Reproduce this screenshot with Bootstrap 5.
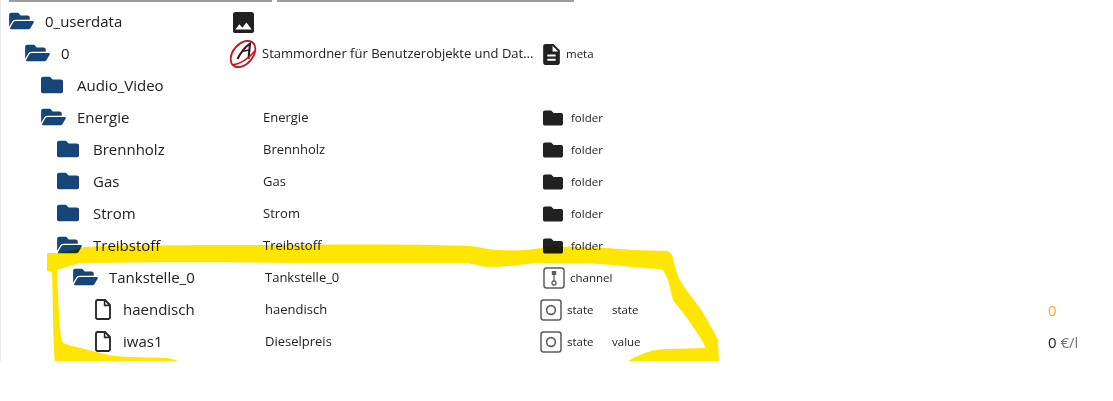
<!DOCTYPE html>
<html lang="en">
<head>
    <meta charset="UTF-8">
    <title>Objects</title>
    <link href="https://cdn.jsdelivr.net/npm/bootstrap@5.3.0/dist/css/bootstrap.min.css" rel="stylesheet">
    <style>
        body { background: #fff; color: #212121; font-family: "Open Sans", "Noto Sans", sans-serif; }
        .tree-wrap { height: 361px; overflow: hidden; border-left: 1px solid #e8e8e8; }
        .head-rule { height: 2px; margin-bottom: 4px; padding-left: 8px; }
        .head-rule span { display: block; height: 2px; background: #9e9e9e; }
        .rule-a { width: 263px; }
        .rule-b { width: 297px; margin-left: 5px; }
        .tree-row { height: 32px; }
        .name-cell { width: 228px; font-size: 15px; padding-bottom: 2px; }
        .lvl0 { padding-left: 8px; }
        .lvl1 { padding-left: 24px; }
        .lvl2 { padding-left: 40px; }
        .lvl3 { padding-left: 56px; }
        .lvl4 { padding-left: 72px; }
        .lvl5 { padding-left: 94px; }
        .tree-ico { width: 36px; flex: none; }
        .tree-ico svg { display: block; }
        .lvl5 .tree-ico { width: 28px; }
        .fold-open { width: 25px; height: 22px; fill: #164578; }
        .fold-shut { width: 22px; height: 22px; fill: #164578; }
        .file-line { width: 16px; height: 21px; }
        .obj-ico { width: 33px; flex: none; }
        .obj-ico svg { display: block; }
        .desc-cell { width: 277px; flex: none; font-size: 13px; padding-left: 1px; white-space: nowrap; }
        .desc-in { padding-left: 3px; }
        .type-cell { width: 73px; flex: none; font-size: 11.5px; }
        .type-cell svg { flex: none; }
        .t-folder { padding-left: 4px; gap: 8px; }
        .t-meta { gap: 2px; }
        .t-channel { padding-left: 4px; gap: 5px; }
        .t-state { padding-left: 1px; gap: 5px; }
        .role-cell { width: 436px; flex: none; font-size: 11.5px; }
        .val-cell { font-size: 15px; }
        .val-warn { color: #ffa726; }
        .val-unit { color: #757575; }
        .marker { position: absolute; left: -1px; top: 0; mix-blend-mode: multiply; pointer-events: none; }
    </style>
</head>
<body>
    <svg width="0" height="0" class="d-block">
        <defs>
            <symbol id="i-open" viewBox="0 0 576 512"><path d="M572.694 292.093L500.27 416.248A63.997 63.997 0 0 1 444.989 448H45.025c-18.523 0-30.064-20.093-20.731-36.093l72.424-124.155A64 64 0 0 1 152 256h399.964c18.523 0 30.064 20.093 20.73 36.093zM152 224h328v-48c0-26.51-21.49-48-48-48H272l-64-64H48C21.49 64 0 85.49 0 112v278.046l69.077-118.418C86.214 242.25 117.989 224 152 224z"/></symbol>
            <symbol id="i-shut" viewBox="0 0 512 512"><path d="M464 128H272l-64-64H48C21.49 64 0 85.49 0 112v288c0 26.51 21.49 48 48 48h416c26.51 0 48-21.49 48-48V176c0-26.51-21.49-48-48-48z"/></symbol>
            <symbol id="i-file" viewBox="0 0 16 21"><path d="M2.5 1H10l5 5v12.5a1.5 1.5 0 0 1-1.5 1.5h-11A1.5 1.5 0 0 1 1 18.5v-16A1.5 1.5 0 0 1 2.5 1z" fill="none" stroke="#2b2b2b" stroke-width="1.9"/><path d="M9.6 1v5.4H15" fill="none" stroke="#2b2b2b" stroke-width="1.6"/></symbol>
            <symbol id="i-state" viewBox="0 0 22 22"><rect x="1" y="1" width="20" height="20" rx="2.5" fill="none" stroke="#5c5c5c" stroke-width="1.5"/><circle cx="11" cy="11" r="4.4" fill="none" stroke="#5c5c5c" stroke-width="1.6"/></symbol>
        </defs>
    </svg>

    <div class="tree-wrap position-relative">
        <div class="head-rule d-flex"><span class="rule-a"></span><span class="rule-b"></span></div>

        <div class="tree-row d-flex align-items-center">
            <div class="name-cell lvl0 d-flex align-items-center"><div class="tree-ico"><svg class="fold-open"><use href="#i-open"/></svg></div>0_userdata</div>
            <div class="obj-ico ps-1">
                <svg width="21" height="21" viewBox="3 3 18 18" fill="#212121"><path d="M21 19V5c0-1.1-.9-2-2-2H5c-1.1 0-2 .9-2 2v14c0 1.1.9 2 2 2h14c1.1 0 2-.9 2-2zM8.5 13.5l2.5 3.01L14.5 12l4.5 6H5l3.5-4.5z"/></svg>
            </div>
        </div>

        <div class="tree-row d-flex align-items-center">
            <div class="name-cell lvl1 d-flex align-items-center"><div class="tree-ico"><svg class="fold-open"><use href="#i-open"/></svg></div>0</div>
            <div class="obj-ico">
                <svg width="28" height="28" viewBox="0 0 28 28" fill="none">
                    <ellipse cx="14" cy="14" rx="15" ry="10" transform="rotate(-50 14 14)" stroke="#c4161c" stroke-width="1.8"/>
                    <path d="M8.5 19C11.500 13 16 7 21 3.500L19.500 19" stroke="#3b1114" stroke-width="2.100"/>
                    <path d="M12.500 11.500L20.500 10" stroke="#3b1114" stroke-width="1.300"/>
                    <path d="M4 24.500C11 24.500 20 18 26 11" stroke="#c4161c" stroke-width="1.600"/>
                </svg>
            </div>
            <div class="desc-cell ps-0">Stammordner für Benutzerobjekte und Dat...</div>
            <div class="type-cell t-meta d-flex align-items-center">
                <svg width="25" height="25" viewBox="0 0 24 24" fill="#212121"><path d="M14 2H6c-1.1 0-2 .9-2 2v16c0 1.1.9 2 2 2h12c1.1 0 2-.9 2-2V8l-6-6zm2 16H8v-2h8v2zm0-4H8v-2h8v2zm-3-5V3.5L18.5 9H13z"/></svg>
                <span>meta</span>
            </div>
        </div>

        <div class="tree-row d-flex align-items-center">
            <div class="name-cell lvl2 d-flex align-items-center"><div class="tree-ico"><svg class="fold-shut"><use href="#i-shut"/></svg></div>Audio_Video</div>
        </div>

        <div class="tree-row d-flex align-items-center">
            <div class="name-cell lvl2 d-flex align-items-center"><div class="tree-ico"><svg class="fold-open"><use href="#i-open"/></svg></div>Energie</div>
            <div class="obj-ico"></div>
            <div class="desc-cell">Energie</div>
            <div class="type-cell t-folder d-flex align-items-center"><svg width="20" height="20" fill="#212121"><use href="#i-shut"/></svg><span>folder</span></div>
        </div>

        <div class="tree-row d-flex align-items-center">
            <div class="name-cell lvl3 d-flex align-items-center"><div class="tree-ico"><svg class="fold-shut"><use href="#i-shut"/></svg></div>Brennholz</div>
            <div class="obj-ico"></div>
            <div class="desc-cell">Brennholz</div>
            <div class="type-cell t-folder d-flex align-items-center"><svg width="20" height="20" fill="#212121"><use href="#i-shut"/></svg><span>folder</span></div>
        </div>

        <div class="tree-row d-flex align-items-center">
            <div class="name-cell lvl3 d-flex align-items-center"><div class="tree-ico"><svg class="fold-shut"><use href="#i-shut"/></svg></div>Gas</div>
            <div class="obj-ico"></div>
            <div class="desc-cell">Gas</div>
            <div class="type-cell t-folder d-flex align-items-center"><svg width="20" height="20" fill="#212121"><use href="#i-shut"/></svg><span>folder</span></div>
        </div>

        <div class="tree-row d-flex align-items-center">
            <div class="name-cell lvl3 d-flex align-items-center"><div class="tree-ico"><svg class="fold-shut"><use href="#i-shut"/></svg></div>Strom</div>
            <div class="obj-ico"></div>
            <div class="desc-cell">Strom</div>
            <div class="type-cell t-folder d-flex align-items-center"><svg width="20" height="20" fill="#212121"><use href="#i-shut"/></svg><span>folder</span></div>
        </div>

        <div class="tree-row d-flex align-items-center">
            <div class="name-cell lvl3 d-flex align-items-center"><div class="tree-ico"><svg class="fold-open"><use href="#i-open"/></svg></div>Treibstoff</div>
            <div class="obj-ico"></div>
            <div class="desc-cell">Treibstoff</div>
            <div class="type-cell t-folder d-flex align-items-center"><svg width="20" height="20" fill="#212121"><use href="#i-shut"/></svg><span>folder</span></div>
        </div>

        <div class="tree-row d-flex align-items-center">
            <div class="name-cell lvl4 d-flex align-items-center"><div class="tree-ico"><svg class="fold-open"><use href="#i-open"/></svg></div>Tankstelle_0</div>
            <div class="obj-ico"></div>
            <div class="desc-cell desc-in">Tankstelle_0</div>
            <div class="type-cell t-channel d-flex align-items-center">
                <svg width="22" height="22" viewBox="0 0 22 22" fill="none">
                    <rect x="1" y="1" width="20" height="20" rx="2.5" stroke="#5c5c5c" stroke-width="1.500"/>
                    <path d="M11 4v10" stroke="#5c5c5c" stroke-width="1.300"/>
                    <rect x="8.800" y="4" width="4.400" height="4" fill="#5c5c5c"/>
                    <circle cx="11" cy="16" r="2" stroke="#5c5c5c" stroke-width="1.300"/>
                </svg>
                <span>channel</span>
            </div>
        </div>

        <div class="tree-row d-flex align-items-center">
            <div class="name-cell lvl5 d-flex align-items-center"><div class="tree-ico"><svg class="file-line"><use href="#i-file"/></svg></div>haendisch</div>
            <div class="obj-ico"></div>
            <div class="desc-cell desc-in">haendisch</div>
            <div class="type-cell t-state d-flex align-items-center"><svg width="22" height="22"><use href="#i-state"/></svg><span>state</span></div>
            <div class="role-cell">state</div>
            <div class="val-cell val-warn">0</div>
        </div>

        <div class="tree-row d-flex align-items-center">
            <div class="name-cell lvl5 d-flex align-items-center"><div class="tree-ico"><svg class="file-line"><use href="#i-file"/></svg></div>iwas1</div>
            <div class="obj-ico"></div>
            <div class="desc-cell desc-in">Dieselpreis</div>
            <div class="type-cell t-state d-flex align-items-center"><svg width="22" height="22"><use href="#i-state"/></svg><span>state</span></div>
            <div class="role-cell">value</div>
            <div class="val-cell">0 <span class="val-unit">€/l</span></div>
        </div>

        <!-- hand drawn highlight on top of the rows -->
        <svg class="marker" width="1113" height="361" viewBox="0 0 1113 361">
            <path fill="#ffe600" d="M47 253L57 253C66 252 76 249 85 247C110 245 200 245 300 245C370 244 440 245 470 246C480 247 490 250 500 250C515 251 532 250 547 247C575 246 600 247 633 250L667 251C670 252 671 253 672 255C674 262 675 268 677 273C678 277 680 280 682 283C684 287 687 291 690 295L700 308C707 319 713 330 718 340L719 362L627 362C632 358 636 357 640 355C648 351 657 349 667 349L706 348C701 338 694 328 687 318C682 311 677 306 673 300C671 293 670 287 668 280C666 276 665 273 663 270C652 268 642 268 633 267L600 264C585 263 570 264 533 263C520 265 510 267 487 267C475 265 470 263 463 263L300 263C230 262 150 262 80 263C72 265 64 268 57 270L57 272C58 295 59 320 61 337C62 340 62 342 63 343C68 345 72 346 77 347C85 349 92 351 100 353C112 356 122 357 133 357C145 357 156 358 167 358C172 359 176 360 180 362L55 362C53 340 53 300 52 272L47 271Z"/>
        </svg>
    </div>

    <script src="https://cdn.jsdelivr.net/npm/bootstrap@5.3.0/dist/js/bootstrap.bundle.min.js"></script>
</body>
</html>
